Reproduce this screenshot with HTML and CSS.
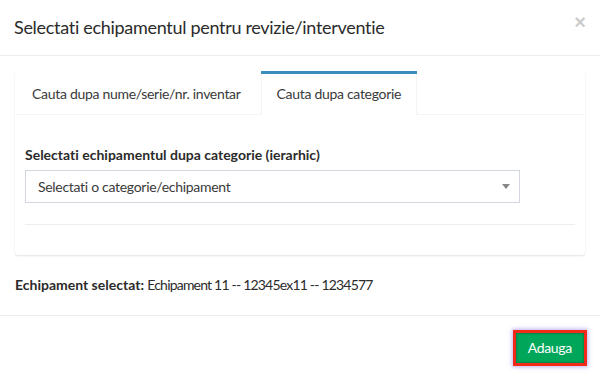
FILE: index.html
```html
<!DOCTYPE html>
<html lang="ro">
<head>
  <meta charset="UTF-8" />
  <meta name="viewport" content="width=device-width, initial-scale=1.0">
  <title>Selectati echipamentul</title>
  <link rel="stylesheet" href="styles.css">
</head>
<body>

  <div class="modal">
    <div class="modal-header">
      <h4 class="modal-title">Selectati echipamentul pentru revizie/interventie</h4>
      <button class="close" type="button">&times;</button>
    </div>

    <div class="modal-body">
      <div class="nav-tabs-custom">
        <ul class="nav-tabs">
          <li><a href="#byName">Cauta dupa nume/serie/nr. inventar</a></li>
          <li class="active"><a href="#byCategory">Cauta dupa categorie</a></li>
        </ul>
        <div class="tab-content">
          <div class="form-group">
            <label for="category">Selectati echipamentul dupa categorie (ierarhic)</label>
            <div class="select-box" id="category">
              <span>Selectati o categorie/echipament</span>
              <b class="caret"></b>
            </div>
          </div>
          <hr>
        </div>
      </div>

      <p class="selected"><strong>Echipament selectat:</strong> <span class="value">Echipament 11 -- 12345ex11 -- 1234577</span></p>
    </div>

    <div class="modal-footer">
      <button class="btn-success" type="button">Adauga</button>
    </div>
  </div>

</body>
</html>
```

FILE: styles.css
```css
body {
  font-family: Lato, "Open Sans", sans-serif;
  font-size: 14px;
  line-height: 20px;
  letter-spacing: -0.3px;
  font-variant-ligatures: none;
  color: #2b2b2b;
  background-color: #fff;
  margin: 0;
  padding: 0;
}

.modal {
  width: 600px;
}

.modal-header {
  display: flex;
  justify-content: space-between;
  align-items: center;
  padding: 15px 14px 15px 14px;
  border-bottom: 1px solid #ececec;
}

.modal-title {
  margin: 0;
  font-size: 18px;
  font-weight: normal;
  line-height: 25px;
  color: #2b2b2b;
}

.close {
  border: none;
  background: none;
  padding: 0;
  margin-top: -10px;
  font-size: 20px;
  font-weight: bold;
  color: #000;
  opacity: 0.2;
  cursor: pointer;
}

.modal-body {
  padding: 15px;
}

.nav-tabs-custom {
  background-color: #fff;
  border-radius: 3px;
  box-shadow: 0 1px 2px rgba(0, 0, 0, 0.12);
  margin-bottom: 20px;
}

.nav-tabs {
  display: flex;
  margin: 0;
  padding: 0;
  list-style: none;
  border-bottom: 1px solid #f4f4f4;
}

.nav-tabs li {
  margin-right: 4px;
  margin-bottom: -1px;
  border-top: 3px solid transparent;
}

.nav-tabs li a {
  display: block;
  padding: 10px 15px 10px 16px;
  color: #3a3a3a;
  text-decoration: none;
  border: 1px solid transparent;
  border-top: none;
}

.nav-tabs li.active {
  border-top-color: #3c8dbc;
}

.nav-tabs li.active a {
  padding-left: 15px;
  background-color: #fff;
  border-color: #f4f4f4;
  border-bottom-color: #fff;
}

.tab-content {
  padding: 30px 10px 30px;
}

.form-group label {
  display: block;
  font-weight: bold;
  letter-spacing: 0;
  margin-bottom: 5px;
}

.select-box {
  display: flex;
  justify-content: space-between;
  align-items: center;
  width: 495px;
  height: 33px;
  box-sizing: border-box;
  padding: 0 9px 0 12px;
  border: 1px solid #d2d6de;
  color: #3a3a3a;
}

.caret {
  width: 0;
  height: 0;
  border-style: solid;
  border-width: 5px 4px 0 4px;
  border-color: #888 transparent transparent transparent;
}

hr {
  margin: 21px 0 0;
  border: 0;
  border-top: 1px solid #eee;
}

.selected {
  margin: 0 0 5px;
}

.selected strong {
  letter-spacing: 0;
}

.selected .value {
  letter-spacing: -0.8px;
}

.modal-footer {
  display: flex;
  justify-content: flex-end;
  padding: 14px 13px 14px;
  border-top: 1px solid #ececec;
}

.btn-success {
  font-family: inherit;
  font-size: 14px;
  line-height: 20px;
  letter-spacing: -0.3px;
  padding: 5px 12px;
  color: #fff;
  background-color: #00a65a;
  border: 3px solid #f22a1a;
  box-shadow: 0 0 4px 1px rgba(130, 100, 230, 0.5), inset 0 0 3px rgba(0, 60, 40, 0.6);
  cursor: pointer;
}
```
